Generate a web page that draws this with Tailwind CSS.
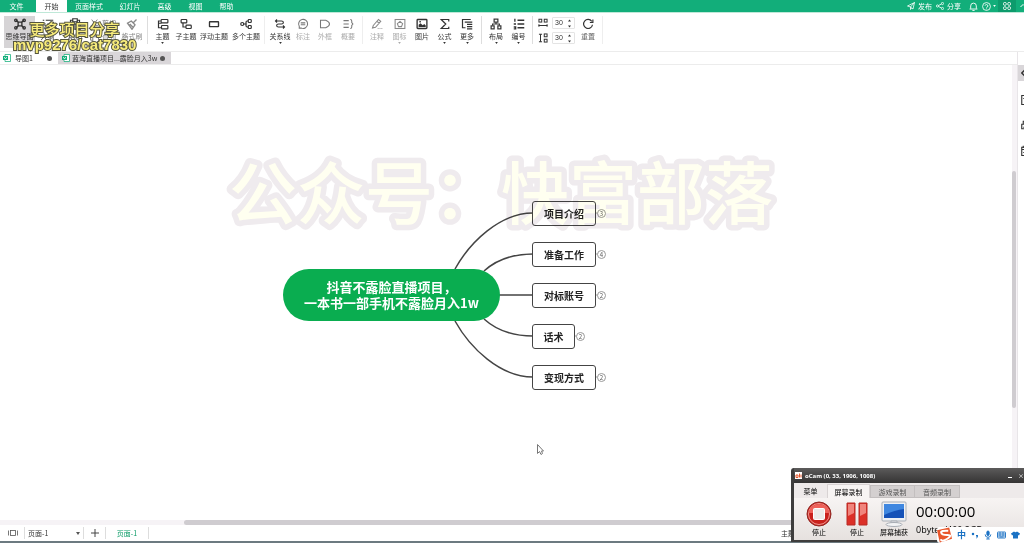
<!DOCTYPE html>
<html lang="zh-CN">
<head>
<meta charset="utf-8">
<title>思维导图</title>
<script src="https://cdn.jsdelivr.net/npm/@tailwindcss/browser@4"></script>
</head>
<body class="relative flex h-screen flex-col overflow-hidden bg-white font-['Noto_Sans_CJK_SC',sans-serif] text-[7px] leading-[10px] text-[#333]">

<!-- Menu bar -->
<header class="flex h-[13px] shrink-0 items-stretch border-b border-[#bfe8d8] bg-[#12ae7a] text-white">
  <nav class="flex whitespace-nowrap">
    <button class="w-9 pr-[3px]">文件</button>
    <button class="w-[31px] bg-white text-[#333]">开始</button>
    <button class="w-[44px]">页面样式</button>
    <button class="w-[38px]">幻灯片</button>
    <button class="w-[31px]">高级</button>
    <button class="w-[31px]">视图</button>
    <button class="w-[31px]">帮助</button>
  </nav>
  <div class="ml-auto flex items-center whitespace-nowrap">
    <button class="flex items-center gap-[3px]">
      <svg class="size-2" viewBox="0 0 16 16" fill="none" stroke="currentColor" stroke-width="1.6"><path d="M1 8 15 1l-3 13-5-4zM7 10v5l2-3M15 1 7 10"/></svg>发布</button>
    <button class="ml-1 flex items-center gap-[3px]">
      <svg class="size-2" viewBox="0 0 16 16" fill="none" stroke="currentColor" stroke-width="1.6"><circle cx="3" cy="8" r="2.2"/><circle cx="13" cy="3" r="2.2"/><circle cx="13" cy="13" r="2.2"/><path d="m5 7 6-3M5 9l6 3"/></svg>分享</button>
    <button aria-label="通知" class="ml-2"><svg class="size-[9px]" viewBox="0 0 16 16" fill="none" stroke="currentColor" stroke-width="1.6"><path d="M3 12V7a5 5 0 0 1 10 0v5M1 12.500h14M6 15h4"/></svg></button>
    <button aria-label="帮助中心" class="ml-1 flex items-center gap-[2px]"><svg class="size-[9px]" viewBox="0 0 16 16" fill="none" stroke="currentColor" stroke-width="1.500"><circle cx="8" cy="8" r="7"/><path d="M5.500 6.500a2.500 2.500 0 1 1 2.500 3V10M8 11.500v1.500"/></svg>
      <svg class="h-[2px] w-[3px]" viewBox="0 0 4 3" fill="currentColor"><path d="M0 0h4L2 3z"/></svg></button>
    <button aria-label="应用" class="ml-[2px] flex h-full w-[18px] items-center justify-center bg-[#0d9b6c]"><svg class="size-2" viewBox="0 0 16 16" fill="none" stroke="currentColor" stroke-width="1.800"><rect x="1" y="1" width="5.500" height="5.500" rx="2"/><rect x="9.500" y="1" width="5.500" height="5.500" rx="2"/><rect x="1" y="9.500" width="5.500" height="5.500" rx="2"/><rect x="9.500" y="9.500" width="5.500" height="5.500" rx="2"/></svg></button>
    <button aria-label="收起" class="w-[8px] pl-1"><svg class="size-1" viewBox="0 0 8 8" fill="none" stroke="currentColor" stroke-width="2"><path d="m1 6 5-5 2 2"/></svg></button>
  </div>
</header>

<!-- Ribbon -->
<section class="relative flex h-[39px] shrink-0 items-start border-b border-[#ececec] pt-[3px] pl-1 whitespace-nowrap [&_svg]:shrink-0">
  <button class="flex h-8 w-[31px] flex-col items-center gap-[1px] bg-[#d6d4d6] pt-[2px]">
    <svg class="size-3" viewBox="0 0 16 16" fill="none" stroke="currentColor" stroke-width="1.800"><path d="M6 6 3 3M10 6l3-3M6 10l-3 3M10 10l3 3"/><rect x="5.500" y="5.500" width="5" height="5" rx="1"/><circle cx="2.500" cy="3" r="1.600"/><circle cx="13.500" cy="3" r="1.600"/><circle cx="2.500" cy="13" r="1.600"/><circle cx="13.500" cy="13" r="1.600"/></svg>思维导图</button>
  <button class="flex w-[25px] flex-col items-center gap-[1px] pt-[2px]">
    <svg class="size-3" viewBox="0 0 16 16" fill="none" stroke="currentColor" stroke-width="1.600"><path d="M5 3h10M7 8h8M7 13h8M1 3h2M3 8h2M3 13h2"/></svg>大纲</button>
  <button class="flex w-[30px] flex-col items-center gap-[1px] pt-[2px]">
    <svg class="size-3" viewBox="0 0 16 16" fill="none" stroke="currentColor" stroke-width="1.600"><path d="M5 3H2v12h5M11 3h3v3M5 1h6v4H5z"/><rect x="8" y="8" width="7" height="7"/></svg>粘贴</button>
  <div class="flex w-[28px] flex-col gap-[5px] pt-[2px] text-[#777]">
    <button class="flex items-center gap-[3px]"><svg class="size-[9px]" viewBox="0 0 16 16" fill="none" stroke="currentColor" stroke-width="1.600"><path d="m3 1 8 11M13 1 5 12"/><circle cx="3.500" cy="13" r="2"/><circle cx="12.500" cy="13" r="2"/></svg>剪切</button>
    <button class="flex items-center gap-[3px]"><svg class="size-[9px]" viewBox="0 0 16 16" fill="none" stroke="currentColor" stroke-width="1.600"><rect x="5" y="5" width="10" height="10"/><path d="M11 5V1H1v10h4"/></svg>复制</button>
  </div>
  <button class="flex w-[28px] flex-col items-center gap-[1px] pt-[2px] text-[#888]">
    <svg class="size-3" viewBox="0 0 16 16" fill="none" stroke="currentColor" stroke-width="1.800"><path d="m14 2-4 4M7 4l5 5M7 4 2 7l6 8 4-6zM5 8l4 4"/></svg>格式刷</button>
  <i class="mr-[2px] ml-[1px] h-7 w-px bg-[#ddd]"></i>
  <button class="flex w-[25px] flex-col items-center gap-[1px] pt-[2px]">
    <svg class="size-3" viewBox="0 0 16 16" fill="none" stroke="currentColor" stroke-width="1.600"><path d="M5 4H2v9h4M2 7h4"/><rect x="5.500" y="2" width="9" height="4.500" rx="1"/><rect x="6" y="10" width="8.500" height="4.500" rx="1"/></svg>主题
    <svg class="h-[2px] w-[3px]" viewBox="0 0 4 3" fill="currentColor"><path d="M0 0h4L2 3z"/></svg></button>
  <button class="flex w-[22px] flex-col items-center gap-[1px] pt-[2px]">
    <svg class="size-3" viewBox="0 0 16 16" fill="none" stroke="currentColor" stroke-width="1.600"><rect x="1.500" y="2" width="7.500" height="4.500" rx="1"/><path d="M4 6.500V12h4"/><rect x="8" y="9.500" width="7" height="4.500" rx="1"/></svg>子主题</button>
  <button class="flex w-[34px] flex-col items-center gap-[1px] pt-[2px]">
    <svg class="size-3" viewBox="0 0 16 16" fill="none" stroke="currentColor" stroke-width="1.800"><rect x="2" y="5" width="12" height="6.500" rx=".5"/></svg>浮动主题</button>
  <button class="flex w-[30px] flex-col items-center gap-[1px] pt-[2px]">
    <svg class="size-3" viewBox="0 0 16 16" fill="none" stroke="currentColor" stroke-width="1.600"><circle cx="3" cy="8" r="2"/><path d="M5 8h4M11 4H9.500Q8 4 8 6v4q0 2 1.500 2H11"/><rect x="11" y="2" width="4" height="4" rx="1"/><rect x="11" y="10" width="4" height="4" rx="1"/></svg>多个主题</button>
  <i class="mx-[3px] h-7 w-px bg-[#eee]"></i>
  <button class="flex w-[24px] flex-col items-center gap-[1px] pt-[2px]">
    <svg class="size-3" viewBox="0 0 16 16" fill="none" stroke="currentColor" stroke-width="1.500"><path d="M2 4h8q2.500 0 2.500 2T10 8H6q-2.500 0-2.500 2T6 12h8M4 2 2 4l2 2M12 10l2 2-2 2"/></svg>关系线
    <svg class="h-[2px] w-[3px]" viewBox="0 0 4 3" fill="currentColor"><path d="M0 0h4L2 3z"/></svg></button>
  <button class="flex w-[22px] flex-col items-center gap-[1px] pt-[2px] text-[#aaa]">
    <svg class="size-3 text-[#777]" viewBox="0 0 16 16" fill="none" stroke="currentColor" stroke-width="1.400"><path d="M3 13.500V11a6 6 0 1 1 3 2.500zM5 6.500h6M5 9h6"/></svg>标注</button>
  <button class="flex w-[22px] flex-col items-center gap-[1px] pt-[2px] text-[#aaa]">
    <svg class="size-3 text-[#777]" viewBox="0 0 16 16" fill="none" stroke="currentColor" stroke-width="1.400"><path d="M2 3h7q5 2 5 5t-5 5H2z"/></svg>外框</button>
  <button class="flex w-[24px] flex-col items-center gap-[1px] pt-[2px] text-[#aaa]">
    <svg class="size-3 text-[#777]" viewBox="0 0 16 16" fill="none" stroke="currentColor" stroke-width="1.400"><path d="M2 3.500h7M2 8h7M2 12.500h7M11 2q2 0 2 2v2l1.500 2L13 10v2q0 2-2 2"/></svg>概要</button>
  <i class="mr-[3px] ml-[2px] h-7 w-px bg-[#eee]"></i>
  <button class="flex w-[22px] flex-col items-center gap-[1px] pt-[2px] text-[#aaa]">
    <svg class="size-3 text-[#888]" viewBox="0 0 16 16" fill="none" stroke="currentColor" stroke-width="1.400"><path d="m3 10 7-8 3 2.500-7 8-4 1zM8 4.500l3 2.500M9 14h1M11.500 14h1M14 14h1"/></svg>注释</button>
  <button class="flex w-[23px] flex-col items-center gap-[1px] pt-[2px] text-[#aaa]">
    <svg class="size-3 text-[#888]" viewBox="0 0 16 16" fill="none" stroke="currentColor" stroke-width="1.400"><rect x="1.500" y="2" width="13" height="12"/><path d="m8 4.500 3.500 3-1.500 4H6L4.500 7.500z"/></svg>图标
    <svg class="h-[2px] w-[3px]" viewBox="0 0 4 3" fill="currentColor"><path d="M0 0h4L2 3z"/></svg></button>
  <button class="flex w-[22px] flex-col items-center gap-[1px] pt-[2px]">
    <svg class="size-3" viewBox="0 0 16 16" fill="none" stroke="currentColor" stroke-width="1.800"><rect x="1.500" y="2" width="13" height="12" rx="1"/><path fill="currentColor" stroke="none" d="M3.500 12V9L6 7l3 2.500L11 8l2 2v2zM4.500 4h2v2h-2z"/></svg>图片</button>
  <button class="flex w-[23px] flex-col items-center gap-[1px] pt-[2px]">
    <svg class="size-3" viewBox="0 0 16 16" fill="none" stroke="currentColor" stroke-width="1.600"><path d="M13 4.500V2H3l6 6-6 6h10v-2.500"/></svg>公式
    <svg class="h-[2px] w-[3px]" viewBox="0 0 4 3" fill="currentColor"><path d="M0 0h4L2 3z"/></svg></button>
  <button class="flex w-[22px] flex-col items-center gap-[1px] pt-[2px]">
    <svg class="size-3" viewBox="0 0 16 16" fill="none" stroke="currentColor" stroke-width="1.600"><path d="M13 2H2v11h4M5 5.500h10M8 8.500h7M8 11.500h7M8 14.500h7"/></svg>更多
    <svg class="h-[2px] w-[3px]" viewBox="0 0 4 3" fill="currentColor"><path d="M0 0h4L2 3z"/></svg></button>
  <i class="mx-[3px] h-7 w-px bg-[#ddd]"></i>
  <button class="flex w-[22px] flex-col items-center gap-[1px] pt-[2px]">
    <svg class="size-3" viewBox="0 0 16 16" fill="none" stroke="currentColor" stroke-width="1.600"><rect x="5.500" y="1.500" width="5" height="4"/><path d="M8 5.500V8M3.500 10V8h9v2"/><rect x="1.500" y="10.500" width="4" height="4"/><rect x="10.500" y="10.500" width="4" height="4"/></svg>布局
    <svg class="h-[2px] w-[3px]" viewBox="0 0 4 3" fill="currentColor"><path d="M0 0h4L2 3z"/></svg></button>
  <button class="flex w-[23px] flex-col items-center gap-[1px] pt-[2px]">
    <svg class="size-3" viewBox="0 0 16 16" fill="none" stroke="currentColor" stroke-width="1.800"><path d="M6 3h9M6 8h9M6 13h9M2.500 1v4M1 8h3M1 12h2.500v2.500H1"/></svg>编号
    <svg class="h-[2px] w-[3px]" viewBox="0 0 4 3" fill="currentColor"><path d="M0 0h4L2 3z"/></svg></button>
  <i class="mr-[5px] ml-[2px] h-7 w-px bg-[#ddd]"></i>
  <div class="flex w-[39px] flex-col gap-[3px] pt-[1px]">
    <label class="flex items-center gap-[4px]"><svg class="size-[10px]" viewBox="0 0 16 16" fill="none" stroke="currentColor" stroke-width="1.600"><rect x="1.500" y="2" width="4.500" height="4.500"/><rect x="10" y="2" width="4.500" height="4.500"/><path d="M1 12h14M1.500 10v4M14.500 10v4"/></svg>
      <span class="flex h-3 w-[23px] items-center rounded-[1px] border border-[#e4e4e4]"><input aria-label="水平间距" value="30" class="w-[15px] pl-[2px] font-['Liberation_Sans',sans-serif] text-[7px]"><svg class="h-[9px] w-[3px]" viewBox="0 0 6 16" fill="currentColor"><path d="M0 4h6L3 0zM0 12h6l-3 4z"/></svg></span></label>
    <label class="flex items-center gap-[4px]"><svg class="size-[10px]" viewBox="0 0 16 16" fill="none" stroke="currentColor" stroke-width="1.600"><rect x="10" y="1.500" width="4.500" height="4.500"/><rect x="10" y="10" width="4.500" height="4.500"/><path d="M4 2v12M1.500 2h5M1.500 14h5"/></svg>
      <span class="flex h-3 w-[23px] items-center rounded-[1px] border border-[#e4e4e4]"><input aria-label="垂直间距" value="30" class="w-[15px] pl-[2px] font-['Liberation_Sans',sans-serif] text-[7px]"><svg class="h-[9px] w-[3px]" viewBox="0 0 6 16" fill="currentColor"><path d="M0 4h6L3 0zM0 12h6l-3 4z"/></svg></span></label>
  </div>
  <button class="flex w-[22px] flex-col items-center gap-[1px] pt-[2px] text-[#666]">
    <svg class="size-3 text-[#333]" viewBox="0 0 16 16" fill="none" stroke="currentColor" stroke-width="1.600"><path d="M13 4.500A6 6 0 1 0 14 9M14.500 2v4h-4"/></svg>重置</button>
  <i class="ml-[3px] h-7 w-px bg-[#eee]"></i>

  <!-- Overlaid caption -->
  <div class="absolute top-[8px] left-[13px] w-[123px] text-center text-[15px] leading-[16px] text-[#f8ec7c] [-webkit-text-stroke:2px_#55553d] [paint-order:stroke]">
    <p class="font-medium">更多项目分享</p>
    <p class="font-['Liberation_Sans',sans-serif] font-bold">mvp9276/cat7830</p>
  </div>
</section>

<div class="flex min-h-0 flex-1">
  <main class="flex min-w-0 flex-1 flex-col">
    <!-- Document tabs -->
    <div class="flex h-[13px] shrink-0 items-stretch border-b border-[#ececec] whitespace-nowrap [&_svg]:shrink-0">
      <button class="flex w-[58px] items-center gap-1 pl-[3px]">
        <svg class="size-2" viewBox="0 0 16 16"><path fill="#fff" stroke="#12ae7a" stroke-width="1.500" d="M4 1h11v14H4z"/><path fill="#12ae7a" d="M0 4h10v8H0z"/><path d="m2.500 6 2.500 4 2.500-4" stroke="#fff" stroke-width="1.500" fill="none"/></svg>导图1
        <span class="mr-[6px] ml-auto size-[5px] shrink-0 rounded-full bg-[#555]"></span></button>
      <button class="flex w-[113px] items-center gap-[2px] bg-[#d9d6d9] pl-1">
        <svg class="size-2" viewBox="0 0 16 16"><path fill="#fff" stroke="#12ae7a" stroke-width="1.500" d="M4 1h11v14H4z"/><path fill="#12ae7a" d="M0 4h10v8H0z"/><path d="m2.500 6 2.500 4 2.500-4" stroke="#fff" stroke-width="1.500" fill="none"/></svg>蓝海直播项目...露脸月入3w
        <span class="mr-[6px] ml-auto size-[5px] shrink-0 rounded-full bg-[#555]"></span></button>
    </div>

    <div class="flex min-h-0 flex-1">
      <!-- Mind map canvas -->
      <div class="relative min-w-0 flex-1 overflow-hidden bg-white">
        <svg class="absolute top-0 left-0 h-[400px] w-[640px]" viewBox="0 65 640 400" fill="none" stroke="#444" stroke-width="1.500">
          <path d="M455 269C470 242 500 213 533 213M484 271C495 261 512 254 533 254M499 295H533M484 319C495 329 512 336 533 336M455 321C470 348 500 377 533 377"/>
          <path stroke="#999" stroke-width="1" d="M595 213h3M595 254h3M595 295h3M575 336h3M595 377h3"/>
          <path stroke="#777" stroke-width="1" fill="#fff" d="M537.500 444.500v9l2-2 1.500 3 1.500-1-1-2.500h2z"/>
        </svg>
        <div class="absolute top-[204px] left-[283px] flex h-[52px] w-[217px] flex-col justify-center rounded-full bg-[#0aad50] text-center text-[13px] leading-[16px] font-bold whitespace-nowrap text-white"><p>抖音不露脸直播项目，</p><p>一本书一部手机不露脸月入1w</p></div>

        <div class="absolute top-[136px] left-[532px] flex items-center gap-[1px]"><div class="flex h-[25px] w-16 items-center justify-center rounded-[3px] border border-[#444] bg-white text-[10px] font-bold text-[#222]">项目介绍</div><button class="flex size-[9px] items-center justify-center rounded-full border border-[#999] bg-white text-[6px] leading-[6px] text-[#555]">3</button></div>
        <div class="absolute top-[177px] left-[532px] flex items-center gap-[1px]"><div class="flex h-[25px] w-16 items-center justify-center rounded-[3px] border border-[#444] bg-white text-[10px] font-bold text-[#222]">准备工作</div><button class="flex size-[9px] items-center justify-center rounded-full border border-[#999] bg-white text-[6px] leading-[6px] text-[#555]">4</button></div>
        <div class="absolute top-[218px] left-[532px] flex items-center gap-[1px]"><div class="flex h-[25px] w-16 items-center justify-center rounded-[3px] border border-[#444] bg-white text-[10px] font-bold text-[#222]">对标账号</div><button class="flex size-[9px] items-center justify-center rounded-full border border-[#999] bg-white text-[6px] leading-[6px] text-[#555]">2</button></div>
        <div class="absolute top-[259px] left-[532px] flex items-center gap-[1px]"><div class="flex h-[25px] w-[43px] items-center justify-center rounded-[3px] border border-[#444] bg-white text-[10px] font-bold text-[#222]">话术</div><button class="flex size-[9px] items-center justify-center rounded-full border border-[#999] bg-white text-[6px] leading-[6px] text-[#555]">2</button></div>
        <div class="absolute top-[300px] left-[532px] flex items-center gap-[1px]"><div class="flex h-[25px] w-16 items-center justify-center rounded-[3px] border border-[#444] bg-white text-[10px] font-bold text-[#222]">变现方式</div><button class="flex size-[9px] items-center justify-center rounded-full border border-[#999] bg-white text-[6px] leading-[6px] text-[#555]">2</button></div>

        <!-- Watermark -->
        <svg class="pointer-events-none absolute top-[80px] left-[220px] h-[100px] w-[570px] mix-blend-multiply" viewBox="0 0 570 100">
          <text x="9" y="74" font-size="68" font-weight="500" fill="#fffff0" stroke="#efebee" stroke-width="11" stroke-linejoin="round" paint-order="stroke">公众号：快富部落</text>
        </svg>
      </div>
      <div class="w-[5px] bg-[#f6f3f6] pt-[106px]"><div class="h-[237px] w-[4px] rounded-full bg-[#cfccd0]"></div></div>
    </div>
    <div class="h-[5px] shrink-0 bg-[#f6f3f6] pr-[40px] pl-[184px]"><div class="h-full rounded-full bg-[#cfccd0]"></div></div>
  </main>

  <!-- Side panel strip -->
  <aside class="flex w-[7px] flex-col border-l border-[#e8e5e8] pt-[13px] [&_svg]:ml-[3px] [&_svg]:h-3 [&_svg]:w-[3px]">
    <button aria-label="样式" class="flex h-4 items-center bg-[#d9d6d9]"><svg viewBox="0 0 4 16" fill="none" stroke="#333" stroke-width="2"><path d="M5 4 1 8l4 4"/></svg></button>
    <button aria-label="剪贴画" class="mt-[13px] flex items-center"><svg viewBox="0 0 4 16" fill="none" stroke="#333" stroke-width="1.500"><path d="M5 2H1v12h4M3 6h2v5"/></svg></button>
    <button aria-label="图层" class="mt-[13px] flex items-center"><svg viewBox="0 0 4 16" fill="none" stroke="#333" stroke-width="1.500"><path d="M5 7H1v6h4M3 7V3h2M3 11h2"/></svg></button>
    <button aria-label="日历" class="mt-[14px] flex items-center"><svg viewBox="0 0 4 16" fill="none" stroke="#333" stroke-width="1.500"><path d="M5 3H1v11h4M1 6h4M3 1v3M3 10h2"/></svg></button>
  </aside>
</div>

<!-- Status bar -->
<footer class="flex h-[18px] shrink-0 items-center border-b-2 border-[#6c7a80] whitespace-nowrap">
  <button aria-label="视图模式" class="ml-2"><svg class="h-2 w-[10px]" viewBox="0 0 20 16" fill="none" stroke="#555" stroke-width="1.600"><rect x="5" y="3" width="10" height="10"/><path d="M1 3v10M19 3v10"/></svg></button>
  <i class="ml-[6px] h-3 w-px bg-[#ddd]"></i>
  <span class="relative ml-[3px] w-[55px]"><select aria-label="页面" class="block w-full appearance-none text-[7px] leading-[10px]"><option>页面-1</option></select><svg class="pointer-events-none absolute top-1 right-[3px] h-[3px] w-1" viewBox="0 0 4 3" fill="#555"><path d="M0 0h4L2 3z"/></svg></span>
  <i class="h-3 w-px bg-[#ddd]"></i>
  <button aria-label="添加页面" class="ml-[7px]"><svg class="size-2" viewBox="0 0 8 8" stroke="#444" fill="none"><path d="M4 0v8M0 4h8"/></svg></button>
  <i class="ml-[6px] h-3 w-px bg-[#ddd]"></i>
  <button class="w-[42px] text-[#0c9c68]">页面-1</button>
  <i class="h-3 w-px bg-[#ddd]"></i>
  <span class="mr-[229px] ml-auto">主题</span>
</footer>

<!-- Screen recorder window -->
<section class="absolute right-0 bottom-[1px] flex h-[74px] w-[233px] flex-col overflow-hidden rounded-tl-[3px] border-b-2 border-l-[3px] border-[#3e3d3d] bg-[#efebea] whitespace-nowrap">
  <div class="flex h-[15px] shrink-0 items-center bg-linear-to-b from-[#5c5b5b] to-[#353434] pr-[6px] pl-[1px] text-white">
    <svg class="size-[7px]" viewBox="0 0 14 14"><path fill="#fff" d="M0 0h14v14H0z"/><path stroke="#e4562c" stroke-width="2" fill="none" d="M2 6h4v5H2zM9 3v8M12 5v6"/></svg>
    <h2 class="ml-[3px] font-['Open_Sans',sans-serif] text-[6px] font-bold">oCam (0, 33, 1906, 1008)</h2>
    <button aria-label="最小化" class="mt-1 ml-auto h-px w-1 bg-white"></button>
    <button aria-label="关闭" class="ml-[6px] -mr-[6px] text-[6px]">×</button>
  </div>
  <div class="flex h-[15px] shrink-0 items-end bg-[#eeeaea]">
    <button class="h-[14px] w-[33px] text-black">菜单</button>
    <button class="h-[14px] w-[43px] border border-b-0 border-[#d8d3d3] bg-[#f7f4f3] text-black">屏幕录制</button>
    <button class="h-[13px] w-[45px] border border-[#c3bfbf] bg-[#d4d0d0] text-[#555]">游戏录制</button>
    <button class="h-[13px] w-[45px] border border-l-0 border-[#c3bfbf] bg-[#d4d0d0] text-[#555]">音频录制</button>
  </div>
  <div class="flex flex-1 items-start bg-linear-to-b from-[#f7f4f3] to-[#e6e1df] pt-[3px] text-black">
    <button class="flex w-[50px] flex-col items-center"><svg class="size-[26px]" viewBox="0 0 26 26"><circle cx="13" cy="13" r="12" fill="#c9211c" stroke="#8f2a25"/><circle cx="13" cy="13" r="10.500" fill="none" stroke="#ef9690"/><path fill="#ee625a" d="M3 12a10 9 0 0 1 20 0z"/><rect x="7.500" y="7.500" width="11" height="11" rx="1" fill="#eceae8" stroke="#fff"/></svg>停止</button>
    <button class="flex w-[26px] flex-col items-center"><svg class="size-[26px]" viewBox="0 0 26 26"><path fill="#dc3028" stroke="#b82b24" d="M3 2h8v22H3zM15 2h8v22h-8z"/><path fill="#f0847c" d="M4 3h6v9l-6 3zM16 3h6v9l-6 3z"/></svg>停止</button>
    <button class="flex w-[46px] flex-col items-center pl-[2px]"><svg class="size-[26px]" viewBox="0 0 26 26"><rect x="1" y="1" width="24" height="19" rx="1" fill="#eef1f5" stroke="#a9aeb5"/><path fill="#1552b8" d="M3 3h20v14H3z"/><path fill="#3f87e0" d="M3 3h20v5Q14 9 3 14z"/><path fill="#e5e7ea" stroke="#a9aeb5" d="M10 20h6v2h-6z"/><ellipse cx="13" cy="23.500" rx="8" ry="2" fill="#f2f3f5" stroke="#a9aeb5"/></svg>屏幕捕获</button>
    <div class="font-['Open_Sans',sans-serif]"><p class="text-[15px] leading-[20px]">00:00:00</p><p class="text-[9px] leading-[18px]">0bytes/400.2GB</p></div>
  </div>
</section>

<!-- Input method bar -->
<div class="absolute right-0 bottom-0 flex h-[16px] w-[87px] items-center gap-[5px] overflow-hidden rounded-l-[3px] bg-white text-[#1b72c4] [&_svg]:shrink-0">
  <svg class="h-4 w-[15px]" viewBox="0 0 16 16"><path fill="#e9562a" d="m0 3 13-3 3 12-13 4z"/><path d="M12 3.500Q4 3 4.500 5.500T11 8t0 4-7 .5" stroke="#fff" stroke-width="2.200" fill="none"/></svg>
  <button class="text-[9px] font-bold">中</button>
  <svg class="size-2" viewBox="0 0 16 16" fill="currentColor"><circle cx="4" cy="6" r="2.500"/><path d="M10 8h4q1 4-3 7l-1-1q2-1 1.500-3H10z"/></svg>
  <svg class="h-[10px] w-2" viewBox="0 0 14 16" fill="none" stroke="currentColor" stroke-width="1.600"><rect x="5" y="1" width="4" height="8" rx="2" fill="currentColor"/><path d="M2 7q0 5 5 5t5-5M7 12v3M4 15h6"/></svg>
  <svg class="h-2 w-[9px]" viewBox="0 0 18 16" fill="none" stroke="currentColor" stroke-width="1.800"><rect x="1" y="2" width="16" height="12" rx="1"/><path d="M1 6h16M1 10h16M6 2v8M12 2v8M5 12h8"/></svg>
  <svg class="h-2 w-[9px]" viewBox="0 0 18 16" fill="currentColor"><path d="M6 1q3 3 6 0l6 4-2 4-2-1v7H4V8L2 9 0 5z"/></svg>
  <svg class="size-2" viewBox="0 0 16 16" fill="#7a4ab0"><path d="M0 1h6v6H0zM8 1h6v6H8zM0 9h6v6H0zM8 9h6v6H8z"/></svg>
</div>
</body>
</html>
